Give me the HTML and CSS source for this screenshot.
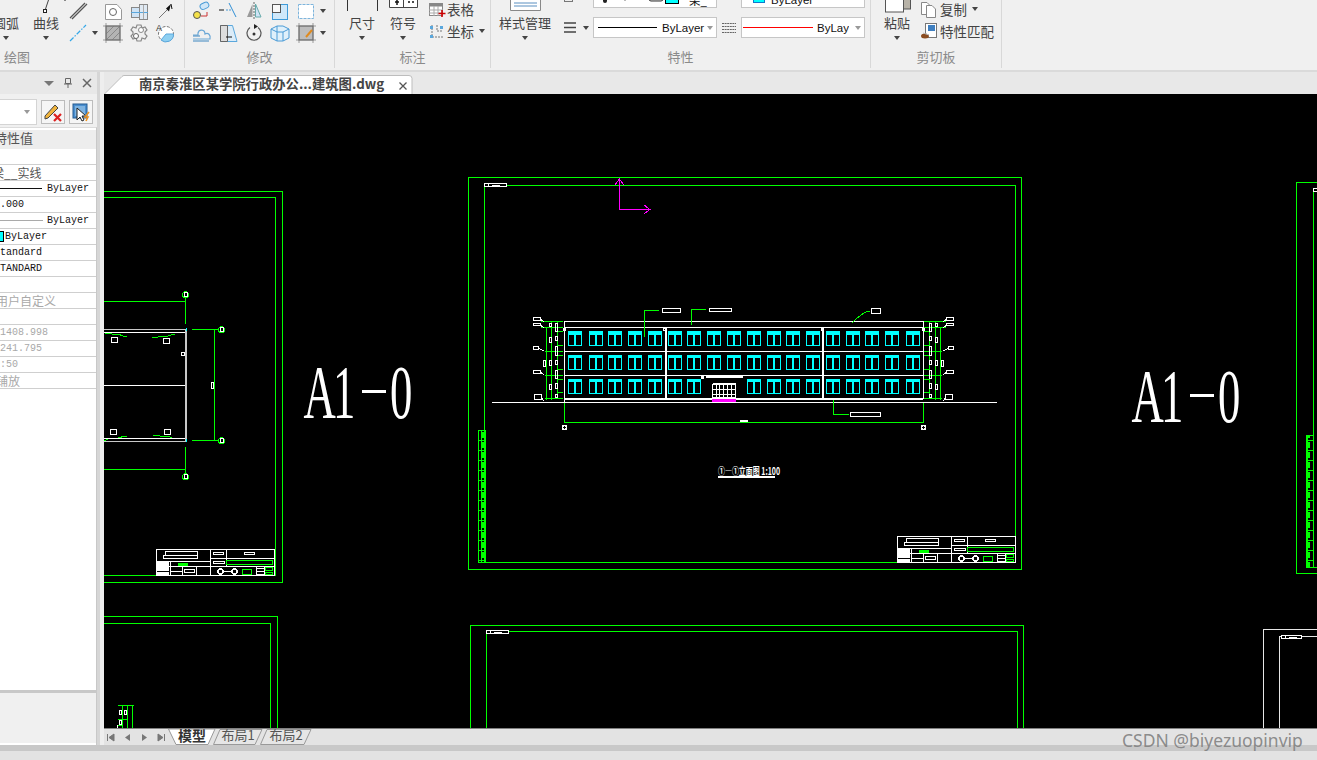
FILE: index.html
```html
<!DOCTYPE html>
<html lang="zh-CN">
<head>
<meta charset="utf-8">
<title>南京秦淮区某学院行政办公...建筑图.dwg</title>
<link rel="stylesheet" href="styles.css">
</head>
<body>
<header class="ribbon">
  <section class="grp grp-draw">
    <div class="grp-body">
      <div class="big big-first"><div class="big-ico"></div><span>圆弧</span><i class="arr"></i></div>
      <div class="big"><div class="big-ico"><svg width="40" height="14" viewBox="0 0 40 14"><path d="M22.500 0 19.500 9" fill="none" stroke="#444"/><rect x="17.500" y="9.500" width="3" height="3" fill="#fff" stroke="#222"/><path d="M38 .5h3" stroke="#888"/></svg></div><span>曲线</span><i class="arr"></i></div>
      <div class="icons icons-draw">
        <svg class="ic" viewBox="0 0 22 20"><path d="M3 17 18 2M5 18 20 3" stroke="#555" stroke-width="1.300" fill="none"/><path d="M4 17.500 19 2.500" stroke="#aaa" stroke-dasharray="1 1"/></svg>
        <span></span>
        <svg class="ic" viewBox="0 0 22 20"><path d="M3.500 3.500H15L19.500 8.500V18.500H3.500Z" fill="#fff" stroke="#999"/><circle cx="11" cy="11" r="3.500" fill="none" stroke="#666"/></svg>
        <svg class="ic" viewBox="0 0 22 20"><rect x="3.500" y="6.500" width="8" height="10" fill="#cfe3f5" stroke="#888"/><rect x="11.500" y="3.500" width="8" height="15" fill="#dfe9f3" stroke="#888"/><path d="M3 11.500H20" stroke="#5aa7dc"/><path d="M15.500 4V18" stroke="#aaa"/></svg>
        <svg class="ic" viewBox="0 0 22 20"><path d="M5 17 14 8" stroke="#777"/><path d="M17 3 12 7.500 15 10.500Z" fill="#111"/><path d="M17 3 18 8" stroke="#111"/></svg>
        <svg class="ic" viewBox="0 0 22 20"><path d="M3 18 19 2" stroke="#33a7e8" stroke-width="1.200" stroke-dasharray="5 1.500 1.500 1.500"/></svg>
        <i class="arr arr-cell"></i>
        <svg class="ic" viewBox="0 0 22 20"><rect x="4" y="3" width="14" height="14" fill="#b4b4b4" stroke="#666"/><path d="M4 17 18 3M4 11 12 3M10 17 18 9M1 3h20M1 17h20M4 0v20M18 0v20" stroke="#777" stroke-width=".7"/></svg>
        <svg class="ic" viewBox="0 0 22 20"><path d="M9 2h4l1 3 3-1 2 3-2 2v2l2 2-2 3-3-1-1 3H9l-1-3-3 1-2-3 2-2V9L3 7l2-3 3 1Z" fill="#f0f0f0" stroke="#888" stroke-width="1.200"/><circle cx="8" cy="13" r="2.500" fill="#fff" stroke="#666"/><circle cx="13" cy="7" r="2.500" fill="#fff" stroke="#888"/></svg>
        <svg class="ic" viewBox="0 0 22 20"><circle cx="12" cy="11" r="7.500" fill="#fff" stroke="#777" stroke-dasharray="3 1.500"/><path d="M12 11H19.500A7.500 7.500 0 0 1 7 17Z" fill="#8fd0f2" stroke="#5aa7dc"/><text x="2" y="8" class="ic-txt">A</text></svg>
      </div>
    </div>
    <div class="grp-label grp-label-left">绘图</div>
  </section>

  <section class="grp grp-mod">
    <div class="grp-body">
      <div class="icons icons-mod">
        <svg class="ic" viewBox="0 0 22 20"><rect x="9" y="2" width="9" height="6" rx="3" transform="rotate(-25 13 5)" fill="#cfe6f7" stroke="#4a9bd6"/><circle cx="6" cy="14" r="3.500" fill="#f5e24a" stroke="#555"/><path d="M10 15h6V11" fill="none" stroke="#c33"/></svg>
        <svg class="ic" viewBox="0 0 22 20"><path d="M2 9H7" stroke="#444" stroke-width="1.300"/><path d="M9 9h5" stroke="#4a9bd6" stroke-dasharray="2 1"/><path d="M12 2 19 16" stroke="#2f8fd6"/></svg>
        <svg class="ic" viewBox="0 0 22 20"><path d="M9.500 3 4 16H9.500Z" fill="#999"/><path d="M12.500 3 18 16H12.500Z" fill="#cfe3f5" stroke="#6aa"/><path d="M11 1V19" stroke="#666" stroke-dasharray="2 1"/></svg>
        <svg class="ic" viewBox="0 0 22 20"><rect x="3.500" y="3.500" width="15" height="15" fill="#cfe8fa" stroke="#3f9bd9"/><rect x="3.500" y="3.500" width="8" height="8" fill="#f8f8f8" stroke="#555"/></svg>
        <svg class="ic" viewBox="0 0 22 20"><rect x="3.500" y="3.500" width="15" height="14" fill="#fff" stroke="#7db4dc" stroke-dasharray="3 1"/></svg>
        <i class="arr arr-cell"></i>
        <svg class="ic" viewBox="0 0 22 20"><path d="M2 16H19C20 12 17 9 14 11 14 6 8 6 7 10V12H2" fill="none" stroke="#6aa7d6" stroke-width="1.200"/><path d="M2 13H9M2 18H18" stroke="#3c86bf"/></svg>
        <svg class="ic" viewBox="0 0 22 20"><path d="M3.500 2.500H15.500L20 18.500H3.500Z" fill="#dcecf8" stroke="#5aa7dc"/><path d="M3.500 2.500H10.500V18.500H3.500Z" fill="#ddd" stroke="#666"/><path d="M9 14h6" stroke="#111"/></svg>
        <svg class="ic" viewBox="0 0 22 20"><path d="M7 4.500A7 7 0 1 0 15 4.500" fill="none" stroke="#555" stroke-width="1.200"/><path d="M11 1V6L15 3.500Z" fill="#222"/><circle cx="11" cy="11" r="1.500" fill="#333"/></svg>
        <svg class="ic" viewBox="0 0 22 20"><path d="M2 6 8 3H14L20 6V15L14 18H8L2 15Z" fill="#dff0fb" stroke="#4a9bd6"/><path d="M2 6 8 9H14L20 6M8 9V18M14 9V18M8 3V9" fill="none" stroke="#4a9bd6"/></svg>
        <svg class="ic" viewBox="0 0 22 20"><rect x="4" y="3" width="14" height="14" fill="#bdbdbd" stroke="#666"/><path d="M1 3h20M1 17h20M4 0v20M18 0v20" stroke="#777" stroke-width=".7"/><path d="M11 14 17 7" stroke="#e08a1e" stroke-width="2"/></svg>
        <i class="arr arr-cell"></i>
      </div>
    </div>
    <div class="grp-label">修改</div>
  </section>

  <section class="grp grp-dim">
    <div class="grp-body">
      <div class="big"><div class="big-ico"><svg width="40" height="14" viewBox="0 0 40 14"><path d="M5.500 0V11M35.500 0V11" stroke="#333"/></svg></div><span>尺寸</span><i class="arr"></i></div>
      <div class="big big-sym"><div class="big-ico"><svg width="40" height="14" viewBox="0 0 40 14"><path d="M6.500 0V7.500H34.500V0M20.500 0V7.500" fill="#fff" stroke="#444"/><path d="M12 2H16M14 0V5M25 2h2M29 2h2" stroke="#111" stroke-width="1.500"/></svg></div><span>符号</span><i class="arr"></i></div>
      <div class="small-col">
        <div class="small"><svg class="ic-s" viewBox="0 0 18 18"><rect x="1.500" y="3.500" width="13" height="12" fill="#fff" stroke="#888"/><rect x="1.500" y="3.500" width="13" height="3" fill="#888"/><path d="M1 10h14M1 13h14M6 6v10M10 6v10" stroke="#aaa"/><path d="M14 10v7M10.500 13.500h7" stroke="#c00" stroke-width="1.600"/></svg><span>表格</span></div>
        <div class="small"><svg class="ic-s" viewBox="0 0 18 18"><path d="M4 3V15H15" fill="none" stroke="#777" stroke-dasharray="2 1"/><path d="M9 3V9H15" fill="none" stroke="#777" stroke-dasharray="2 1"/><rect x="2" y="4" width="3" height="3" fill="#5aa7dc"/><rect x="2" y="13" width="3" height="3" fill="#5aa7dc"/><rect x="12" y="4" width="3" height="3" fill="#5aa7dc"/></svg><span>坐标</span><i class="arr arr-inline"></i></div>
      </div>
    </div>
    <div class="grp-label">标注</div>
  </section>

  <section class="grp grp-prop">
    <div class="grp-body">
      <div class="big big-style"><div class="big-ico"><svg width="56" height="14" viewBox="0 0 56 14"><path d="M13.500 0V10.500H43.500V0" fill="#fff" stroke="#888"/><path d="M17 3H40M17 6H40" stroke="#5b8fc0"/></svg></div><span>样式管理</span><i class="arr"></i></div>
      <div class="prop-grid">
        <svg class="ic-p" viewBox="0 0 18 16"><rect x="3.500" y="2.500" width="8" height="10" fill="#eee" stroke="#777"/><path d="M12 9h5" stroke="#777"/></svg>
        <span></span>
        <div class="combo combo-top"><svg width="100" height="14" viewBox="0 0 100 14"><rect x="5" y="3" width="4" height="7" rx="2" fill="#222"/><circle cx="27" cy="4" r="3" fill="#fff" stroke="#333"/><rect x="36" y="3" width="9" height="4" fill="#222"/><rect x="51" y="2" width="14" height="6" rx="2" fill="#ddd" stroke="#333"/><rect x="67.500" y=".500" width="13" height="10" fill="#0ff" stroke="#000"/></svg><span class="combo-txt">架_</span></div>
        <svg class="ic-p" viewBox="0 0 18 16"><circle cx="9" cy="2" r="5.500" fill="#ee9b22"/><path d="M9 2V8A6 6 0 0 1 4 4Z" fill="#7ebb3a"/></svg>
        <div class="combo combo-top"><svg width="24" height="14" viewBox="0 0 24 14"><rect x="7.500" y="1.500" width="11" height="8" fill="#0ff" stroke="#1177cc"/></svg><span class="combo-txt combo-by">ByLayer</span></div>
        <svg class="ic-p" viewBox="0 0 18 16"><path d="M3 3H15M3 7.500H15M3 12H15" stroke="#444" stroke-width="1.300"/></svg>
        <i class="arr arr-cell"></i>
        <div class="combo"><span class="swatch swatch-black"></span><span class="combo-txt">ByLayer</span><i class="arr arr-gray"></i></div>
        <svg class="ic-p" viewBox="0 0 18 16"><path d="M2 3.500H16M2 6.500H16M2 9.500H16M2 12.500H16" stroke="#666" stroke-dasharray="2 .6"/></svg>
        <div class="combo"><span class="swatch swatch-red"></span><span class="combo-txt combo-clip">ByLayer</span><i class="arr arr-gray"></i></div>
      </div>
    </div>
    <div class="grp-label">特性</div>
  </section>

  <section class="grp grp-clip">
    <div class="grp-body">
      <div class="big big-paste"><div class="big-ico"><svg width="40" height="14" viewBox="0 0 40 14"><rect x="26.500" y="-2" width="7" height="11" fill="#b8b3a8" stroke="#555"/><rect x="8.500" y="-2" width="18" height="14" fill="#fff" stroke="#555"/></svg></div><span>粘贴</span><i class="arr"></i></div>
      <div class="small-col small-col-clip">
        <div class="small"><svg class="ic-s" viewBox="0 0 18 18"><path d="M1.500 2.500H7L10 5.500V14.500H1.500Z" fill="#fff" stroke="#888"/><path d="M6.500 5.500H12L15.500 9V17.500H6.500Z" fill="#fff" stroke="#888"/></svg><span>复制</span><i class="arr arr-inline"></i></div>
        <div class="small"><svg class="ic-s" viewBox="0 0 18 18"><rect x="5.500" y="1.500" width="11" height="14" fill="#fff" stroke="#777"/><rect x="8" y="3" width="7" height="6" fill="#3f7fc0"/><ellipse cx="5" cy="14" rx="4" ry="2.500" fill="#8a4b1f"/><path d="M3 11 9 13" stroke="#bbb"/></svg><span>特性匹配</span></div>
      </div>
    </div>
    <div class="grp-label">剪切板</div>
  </section>
</header>

<main class="workspace">
  <aside class="panel">
    <div class="panel-head">
      <i class="arr arr-big"></i>
      <svg class="pin" width="12" height="12" viewBox="0 0 12 12"><path d="M3.500 1.500H8.500V6.500H3.500ZM2 7H10M6 7V11" fill="none" stroke="#666"/></svg>
      <svg class="pin" width="10" height="10" viewBox="0 0 10 10"><path d="M1 1 9 9M9 1 1 9" stroke="#666" stroke-width="1.500"/></svg>
    </div>
    <div class="panel-tools">
      <div class="panel-combo"><i class="arr arr-gray"></i></div>
      <button class="tool"><svg width="22" height="22" viewBox="0 0 22 22"><path d="M3 15 13 4 16 7 6 17 3 18Z" fill="#f0b43c" stroke="#444"/><path d="M12 13 19 20M19 13 12 20" stroke="#d22" stroke-width="2.200"/></svg></button>
      <button class="tool"><svg width="22" height="22" viewBox="0 0 22 22"><rect x="3" y="3" width="14" height="14" fill="#4a8fd0" stroke="#245a90"/><rect x="5" y="5" width="10" height="10" fill="#7fb3e0"/><path d="M7 7V19L10 16 12 20 14 19 12 15H16Z" fill="#fff" stroke="#222"/><path d="M19 11 15 16H18L16 20" fill="none" stroke="#ee9322" stroke-width="1.600"/></svg></button>
    </div>
    <div class="ptable">
      <div class="pth"><span class="cut">特性值</span></div>
      <div class="prow"></div>
      <div class="prow"><span class="zh cut2">梁__实线</span></div>
      <div class="prow"><span class="pline"></span><span class="mono">ByLayer</span></div>
      <div class="prow"><span class="mono cut3">1.000</span></div>
      <div class="prow"><span class="pline pline-gray"></span><span class="mono">ByLayer</span></div>
      <div class="prow"><span class="pswatch"></span><span class="mono">ByLayer</span></div>
      <div class="prow"><span class="mono cut4">Standard</span></div>
      <div class="prow"><span class="mono cut4">STANDARD</span></div>
      <div class="prow"></div>
      <div class="prow gray"><span class="zh cut5">用户自定义</span></div>
      <div class="prow gray"></div>
      <div class="prow gray"><span class="mono">1408.998</span></div>
      <div class="prow gray"><span class="mono">241.795</span></div>
      <div class="prow gray"><span class="mono cut3">1:50</span></div>
      <div class="prow gray"><span class="zh cut5">铺放</span></div>
      <div class="pfill"></div>
      <div class="pfoot"></div>
    </div>
  </aside>
  <div class="gutter"></div>
  <div class="doc">
    <div class="doc-tabs">
      <div class="doc-tab">
        <svg class="tab-bg" width="309" height="19" viewBox="0 0 309 19"><path d="M.500 19 18 1.500Q19 .500 20 .500H305Q308 .500 308 3.500V19" fill="#fff" stroke="#bdbdbd"/></svg>
        <span class="doc-title">南京秦淮区某学院行政办公...建筑图.dwg</span>
        <svg class="doc-x" width="8" height="8" viewBox="0 0 8 8"><path d="M.500 .500 7.500 7.500M7.500 .500 .500 7.500" stroke="#555" stroke-width="1.300"/></svg>
      </div>
    </div>

    <svg class="canvas" viewBox="104 94 1213 634" preserveAspectRatio="none">
      <defs>
        <pattern id="rungs" x="478" y="430" width="7" height="10" patternUnits="userSpaceOnUse">
          <path d="M0 .500H7M3.500 0V10" stroke="#0f0" fill="none"/>
          <rect x="4" y="2" width="2" height="6" fill="#0f0"/>
        </pattern>
        <g id="win">
          <rect width="14" height="3" fill="#0ff"/>
          <path d="M.500 3V15M13.500 3V15M6.500 3V15M7.500 3V15M0 14.500H14" stroke="#0ff" fill="none"/>
        </g>
        <g id="wincol">
          <use href="#win" y="331"/>
          <rect y="331" width="14" height="4" fill="#0ff"/>
          <use href="#win" y="355"/>
          <use href="#win" y="379"/>
        </g>
        <g id="wincol2">
          <use href="#win" y="331"/>
          <rect y="331" width="14" height="4" fill="#0ff"/>
          <use href="#win" y="355"/>
        </g>
        <g id="mark">
          <circle r="3" fill="none" stroke="#0f0"/>
          <rect x="-1.500" y="-2" width="3" height="4" fill="#000" stroke="#fff"/>
        </g>
        <g id="side" fill="none">
          <path d="M541 321.500H563M541 327.500H563M545 351.500H563M545 375.500H563M545 398.500H563M546.500 327V400M551.500 321V400M557.500 321V399M557 331.500H563M557 345.500H563M557 355.500H563M557 369.500H563M557 379.500H563M557 392.500H563" stroke="#0f0"/>
          <g stroke="#fff">
            <rect x="533.500" y="317.500" width="7" height="3"/><rect x="533.500" y="323.500" width="7" height="2"/><rect x="533.500" y="346.500" width="5" height="3"/><rect x="533.500" y="370.500" width="7" height="3"/><rect x="534.500" y="394.500" width="7" height="5"/>
            <path d="M541 319.500 544 322M541 325.500 544 328M539 348.500 544 351M541 372.500 544 375M542 398.500 544 401"/>
            <rect x="549.500" y="323.500" width="2" height="3"/><rect x="549.500" y="337.500" width="2" height="5"/><rect x="543.500" y="360.500" width="2" height="6"/><rect x="549.500" y="360.500" width="2" height="5"/><rect x="549.500" y="384.500" width="2" height="5"/>
            <rect x="555.500" y="323.500" width="2" height="8"/><rect x="555.500" y="336.500" width="2" height="4"/><rect x="555.500" y="346.500" width="2" height="9"/><rect x="555.500" y="360.500" width="2" height="4"/><rect x="555.500" y="370.500" width="2" height="8"/><rect x="555.500" y="383.500" width="2" height="5"/><rect x="555.500" y="394.500" width="2" height="3"/>
          </g>
        </g>
        <g id="titleblock" fill="none">
          <g stroke="#fff">
            <rect x=".500" y=".500" width="118" height="26"/>
            <path d="M54.500 0V27M70.500 0V17M54 9.500H119M54 17.500H119M0 12.500H54M0 17.500H54M14.500 12V27M26.500 17V27M40.500 17V27M14 22.500H26"/>
            <rect x="9.500" y="2.500" width="32" height="4"/><rect x="7.500" y="6.500" width="34" height="3"/>
            <rect x="57.500" y="3.500" width="10" height="2"/><rect x="88.500" y="3.500" width="10" height="2"/><rect x="57.500" y="12.500" width="11" height="2"/>
            <rect x="1.500" y="13.500" width="11" height="3" fill="#fff"/><rect x="1.500" y="18.500" width="11" height="3" fill="#fff"/><rect x="1.500" y="23" width="11" height="3" fill="#fff"/>
            <rect x="28.500" y="20.500" width="10" height="3"/>
            <circle cx="64.500" cy="22.500" r="2.500" stroke-width="1.500"/><circle cx="78.500" cy="22.500" r="2.500" stroke-width="1.500"/>
            <path d="M67 22.500H76M100.500 18V27M100 19.500H108M100 22.500H108M100 25.500H108M108.500 17V27"/>
          </g>
          <g stroke="#0f0">
            <rect x="70.500" y="11.500" width="46" height="4"/>
            <rect x="22.500" y="14.500" width="9" height="2" fill="#0f0"/>
            <rect x="86.500" y="20.500" width="9" height="5"/>
            <rect x="109.500" y="18.500" width="7" height="3"/><rect x="109.500" y="23.500" width="7" height="2"/>
          </g>
        </g>
      </defs>

      <rect x="104" y="94" width="1213" height="634" fill="#000"/>

      <!-- left sheet -->
      <g fill="none" stroke="#0f0">
        <path d="M104 191.500H282.500V582.500H104"/>
        <path d="M104 197.500H275.500V575.500H104"/>
        <path d="M104 301.500H185.500V324M185.500 297V301M192 329.500H218M214.500 329V440M192 440.500H218M185.500 447V473M104 469.500H185.500"/>
        <path d="M105 333.500 112 334H118L123 336H127M152 337H158L160 336H168L172 334.500H175M104 441 110 438H118L125 436H127M153 435H157L160 436H168L172 438H178"/>
      </g>
      <g fill="none" stroke="#fff">
        <path d="M104 332.500H185M104 385.500H185M104 438.500H185"/>
        <rect x="111.500" y="337.500" width="6" height="5"/><rect x="163.500" y="338.500" width="6" height="5"/><rect x="110.500" y="429.500" width="6" height="5"/><rect x="164.500" y="429.500" width="6" height="5"/>
        <rect x="181.500" y="352.500" width="3" height="3"/>
        <rect x="211.500" y="382.500" width="2" height="6"/>
      </g>
      <path d="M104 329.500H185M104 441.500H187" stroke="#c8c8c8" fill="none"/>
      <path d="M186 329V441" stroke="#c8c8c8" stroke-width="2"/>
      <path d="M186 328V331M186 439V442" stroke="#0ff"/>
      <use href="#mark" x="185.500" y="294.500"/><use href="#mark" x="221.500" y="329.500"/><use href="#mark" x="221.500" y="440.500"/><use href="#mark" x="185.500" y="476.500"/>
      <use href="#titleblock" transform="translate(156 549)"/>
      <text class="big-label" transform="translate(303.500 418) scale(.58 1)" x="0 51 115 149"><tspan>A1</tspan><tspan class="big-dash" dy="-17.500">-</tspan><tspan dy="17.500">0</tspan></text>
      <rect x="362" y="390" width="24" height="3" fill="#fff"/>

      <!-- left sheet below -->
      <path d="M104 616.500H277.500V728M104 623.500H270.500V728" fill="none" stroke="#0f0"/>
      <path d="M118 705.500H134M122.500 705V728M127.500 705V728M132.500 705V728M118 719.500H128M118 725.500H123" fill="none" stroke="#0f0"/>
      <path d="M119.500 710.500H121.500V714.500H119.500ZM124.500 710.500H126.500V714.500H124.500ZM119.500 720.500H121.500V724.500H119.500ZM117.500 725V728" fill="none" stroke="#fff"/>

      <!-- centre sheet -->
      <g fill="none" stroke="#0f0">
        <rect x="468.500" y="177.500" width="553" height="392"/>
        <rect x="484.500" y="185.500" width="531" height="377"/>
        <rect x="478" y="430" width="7" height="132" fill="url(#rungs)"/>
      </g>
      <rect x="484.500" y="183.500" width="22" height="3" fill="#000" stroke="#fff"/>
      <path d="M488 183V187M492 185H500" stroke="#fff"/>
      <path d="M619.500 209V179M615 185 619.500 179 624 185M619 209.500H650M644 205 650 209.500 644 214" fill="none" stroke="#f0f"/>

      <!-- building -->
      <g>
        <g stroke="#fff" fill="none">
          <path d="M492 402.500H997"/>
          <path d="M564 321.500H923.500V399M564.500 321V403"/>
          <path d="M564 327.500H923M564 351.500H923M564 375.500H923"/>
          <path d="M564 399.500H923M564 398.500H923"/>
          <path d="M665.500 327V399M666.500 327V399M823.500 327V399M822.500 327V399"/>
          <rect x="563.500" y="328.500" width="2" height="2"/><rect x="663.500" y="328.500" width="2" height="2"/><rect x="821.500" y="328.500" width="2" height="2"/><rect x="922.500" y="328.500" width="2" height="2"/>
        </g>
        <use href="#wincol" x="568"/><use href="#wincol" x="589"/><use href="#wincol" x="608"/><use href="#wincol" x="628"/><use href="#wincol" x="648"/>
        <use href="#wincol" x="668"/><use href="#wincol" x="687"/><use href="#wincol2" x="707"/><use href="#wincol2" x="727"/><use href="#wincol" x="747"/>
        <use href="#wincol" x="767"/><use href="#wincol" x="786"/><use href="#wincol" x="806"/><use href="#wincol" x="826"/>
        <use href="#wincol" x="846"/><use href="#wincol" x="865"/><use href="#wincol" x="885"/><use href="#wincol" x="906"/>
        <!-- door and canopy -->
        <rect x="701" y="376" width="3" height="3" fill="#fff"/><rect x="706" y="376" width="37" height="2" fill="#fff"/>
        <path d="M712.500 383.500H735.500V399M712.500 383.500V399M712 384.500H736M712 389.500H736M712 394.500H736M712 397.500H736M716.500 383V399M719.500 383V399M723.500 383V399M727.500 383V399M731.500 383V399" fill="none" stroke="#fff"/>
        <rect x="712" y="399" width="24" height="3" fill="#f0f"/>
        <use href="#side"/>
        <use href="#side" transform="translate(1487 0) scale(-1 1)"/>
        <g fill="none" stroke="#0f0">
          <path d="M644.500 337V310.500H659M691.500 325V309.500H706"/>
          <path d="M852 323 856 319 861 315 866 312 870 311.500"/>
          <path d="M833.500 400V414.500H849"/>
          <path d="M564.500 403V422.500H923.500V403"/>
        </g>
        <g fill="none" stroke="#fff">
          <rect x="662.500" y="308.500" width="18" height="4"/>
          <rect x="709.500" y="308.500" width="22" height="3"/>
          <rect x="871.500" y="308.500" width="9" height="5"/>
          <rect x="850.500" y="412.500" width="30" height="4"/>
          <circle cx="564.500" cy="427.500" r="2" stroke-width="1.500"/><circle cx="923.500" cy="427.500" r="2" stroke-width="1.500"/>
        </g>
        <rect x="740" y="420" width="8" height="2" fill="#fff"/>
      </g>
      <text class="caption" x="718" y="475" textLength="62" lengthAdjust="spacingAndGlyphs">①—①立面图 1:100</text>
      <path d="M718 477H775" stroke="#fff" stroke-width="2"/>
      <use href="#titleblock" transform="translate(897 536)"/>
      <text class="big-label" transform="translate(1131.500 422) scale(.58 1)" x="0 51 115 149"><tspan>A1</tspan><tspan class="big-dash" dy="-17.500">-</tspan><tspan dy="17.500">0</tspan></text>
      <rect x="1190" y="394" width="24" height="3" fill="#fff"/>

      <!-- right sheet -->
      <path d="M1317 182.500H1296.500V573.500H1317M1317 188.500H1313.500V567H1317" fill="none" stroke="#0f0"/>
      <rect x="1306" y="435" width="7" height="132" fill="url(#rungs)" stroke="#0f0"/>
      <path d="M1313.500 188.500H1317V191.500H1313.500Z" fill="none" stroke="#fff"/>

      <!-- lower sheets -->
      <path d="M470.500 728V625.500H1023.500V728M486.500 728V631.500H1017.500V728" fill="none" stroke="#0f0"/>
      <rect x="486.500" y="630.500" width="22" height="3" fill="#000" stroke="#fff"/>
      <path d="M490 630V634M494 632H502" stroke="#fff"/>
      <path d="M1263.500 728V629.500H1317M1279.500 728V636.500H1317" fill="none" stroke="#e6e6e6"/>
      <rect x="1281.500" y="635.500" width="20" height="3" fill="#000" stroke="#fff"/>
      <path d="M1285 635V639M1289 637H1297" stroke="#fff"/>
    </svg>

    <nav class="layout-bar">
      <div class="nav-btns">
        <svg width="9" height="9" viewBox="0 0 9 9"><path d="M1.500 1V8M8 1 3 4.500 8 8Z" fill="#777" stroke="#777"/></svg>
        <svg width="9" height="9" viewBox="0 0 9 9"><path d="M7 1 2 4.500 7 8Z" fill="#777"/></svg>
        <svg width="9" height="9" viewBox="0 0 9 9"><path d="M2 1 7 4.500 2 8Z" fill="#777"/></svg>
        <svg width="9" height="9" viewBox="0 0 9 9"><path d="M7.500 1V8M1 1 6 4.500 1 8Z" fill="#777" stroke="#777"/></svg>
      </div>
      <div class="ltab ltab-model">
        <svg class="tab-bg" width="48" height="16" viewBox="0 0 48 16"><path d="M.500 0 8 15.500H40L47 0Z" fill="#fff" stroke="#999"/></svg>
        <span>模型</span>
      </div>
      <div class="ltab ltab-a">
        <svg class="tab-bg" width="50" height="16" viewBox="0 0 50 16"><path d="M7 .500H49L42 15.500H7L.500 15.500Z" fill="#e6e6e6" stroke="#999"/></svg>
        <span>布局1</span>
      </div>
      <div class="ltab ltab-b">
        <svg class="tab-bg" width="52" height="16" viewBox="0 0 52 16"><path d="M7 .500H51L44 15.500H7L.500 15.500Z" fill="#e6e6e6" stroke="#999"/></svg>
        <span>布局2</span>
      </div>
    </nav>
  </div>
</main>
<div class="hscroll"></div>
<footer class="status"></footer>
<div class="watermark">CSDN @biyezuopinvip</div>
</body>
</html>
```
FILE: styles.css
```css
* { box-sizing: border-box; }
html, body { margin: 0; padding: 0; }
body {
  width: 1317px;
  height: 760px;
  overflow: hidden;
  position: relative;
  background: #f0f0f0;
  font-family: "Noto Sans CJK SC", "Noto Sans", sans-serif;
  color: #444;
}

/* ribbon */
.ribbon {
  display: flex;
  height: 72px;
  background: #f0f0f0;
  border-bottom: 2px solid #dadada;
  overflow: hidden;
}
.grp {
  display: flex;
  flex-direction: column;
  height: 68px;
  border-right: 1px solid #d8d8d8;
  flex: none;
}
.grp-draw { width: 185px; }
.grp-mod { width: 150px; }
.grp-dim { width: 156px; }
.grp-prop { width: 380px; }
.grp-clip { width: 131px; }
.grp-mod .grp-body { padding-left: 4px; }
.grp-dim .grp-body { padding-left: 7px; }
.grp-prop .grp-body { padding-left: 6px; }
.grp-clip .grp-body { padding-left: 6px; }
.grp-body { display: flex; height: 48px; flex: none; }
.grp-label {
  height: 18px;
  font-size: 13px;
  line-height: 17px;
  color: #8a8a8a;
  text-align: center;
}
.grp-draw .grp-label-left { text-align: left; padding-left: 4px; }

.big {
  width: 40px;
  flex: none;
  display: flex;
  flex-direction: column;
  align-items: center;
  font-size: 13px;
  line-height: 18px;
  white-space: nowrap;
}
.big-first { margin-left: -14px; }
.big-sym { margin-left: 1px; }
.big-style { width: 56px; }
.big-ico { height: 14px; flex: none; }
.big-ico svg { display: block; overflow: hidden; }
.big .arr { margin-top: 4px; }

.arr {
  display: block;
  width: 0;
  height: 0;
  border-left: 3.500px solid transparent;
  border-right: 3.500px solid transparent;
  border-top: 4px solid #444;
}
.arr-cell { align-self: center; justify-self: center; }
.arr-inline { margin-left: 5px; }
.arr-gray { border-top-color: #999; }
.arr-big { border-left-width: 5px; border-right-width: 5px; border-top: 5px solid #777; }

.icons {
  display: grid;
  grid-auto-rows: 22px;
  align-items: center;
  justify-items: center;
}
.icons-draw { grid-template-columns: 24px 10px 26px 26px 26px; }
.icons-mod { grid-template-columns: 26px 26px 26px 26px 26px 8px; }
.ic { width: 22px; height: 20px; display: block; }
.ic-txt { font: 9px "Liberation Sans", sans-serif; fill: #333; }

.small-col { margin: -2px 0 0 5px; display: flex; flex-direction: column; }
.small-col-clip { margin-left: 3px; }
.small {
  display: flex;
  align-items: center;
  height: 22px;
  font-size: 13.500px;
  white-space: nowrap;
}
.ic-s { width: 18px; height: 18px; flex: none; margin-right: 1px; }
.small-col-clip .ic-s { margin-right: 2px; }

.prop-grid {
  display: grid;
  grid-template-columns: 18px 14px 124px 24px 124px;
  grid-template-rows: 22px 21px;
  row-gap: 9px;
  margin: -14px 0 0 8px;
  align-items: center;
  justify-items: center;
}
.ic-p { width: 18px; height: 16px; display: block; }
.combo {
  width: 124px;
  height: 21px;
  display: flex;
  align-items: center;
  background: #fff;
  border: 1px solid #c6c6c6;
  padding: 0 3px 0 4px;
  font: 11.500px "Liberation Sans", Arial, sans-serif;
  color: #111;
  overflow: hidden;
}
.combo-top { height: 22px; align-items: flex-end; padding-bottom: 0; }
.combo-top svg { flex: none; }
.combo-top .combo-txt { font-family: "Noto Sans CJK SC", sans-serif; margin-left: -9px; line-height: 14px; }
.combo-top .combo-by { margin-left: 1px; font-family: "Liberation Sans", sans-serif; }
.swatch { width: 59px; height: 1px; flex: none; }
.swatch-black { background: #000; }
.swatch-red { background: #f00; width: 70px; margin-left: -3px; }
.combo-txt { margin-left: 5px; white-space: nowrap; width: 44px; flex: none; }
.combo-clip { width: 32px; overflow: hidden; margin-left: 4px; }
.combo .arr { margin-left: auto; }

/* workspace */
.workspace { display: flex; height: 673px; }
.panel { width: 97px; flex: none; display: flex; flex-direction: column; background: #f0f0f0; overflow: hidden; }
.panel-head {
  height: 22px;
  background: #e8e8e8;
  display: flex;
  align-items: center;
  justify-content: flex-end;
  gap: 8px;
  padding-right: 5px;
}
.panel-tools { height: 33px; display: flex; align-items: center; gap: 4px; padding-top: 3px; flex: none; }
.panel-combo {
  width: 38px;
  height: 26px;
  margin-left: -1px;
  background: #fff;
  border: 1px solid #d4d4d4;
  display: flex;
  align-items: center;
  justify-content: flex-end;
  padding-right: 6px;
}
.tool {
  width: 24px;
  height: 24px;
  padding: 0;
  margin-right: 0;
  background: #f5f5f5;
  border: 1px solid #bcbcbc;
  display: flex;
  align-items: center;
  justify-content: center;
}
.ptable {
  flex: 1;
  display: flex;
  flex-direction: column;
  background: #fff;
  border-right: 1px solid #c8c8c8;
  border-top: 1px solid #dcdcdc;
  padding-top: 2px;
  min-height: 0;
}
.pth {
  height: 19px;
  background: #ededed;
  font-size: 13px;
  line-height: 16px;
  color: #555;
  flex: none;
  overflow: hidden;
}
.prow {
  height: 16px;
  flex: none;
  display: flex;
  align-items: center;
  border-bottom: 1px solid #cfcfcf;
  white-space: nowrap;
  overflow: hidden;
}
.prow.gray, .prow.gray .zh, .prow.gray .mono { color: #a9a9a9; }
.zh { font-size: 12px; color: #555; line-height: 13px; margin-bottom: 1px; }
.mono { font: 10px/15px "Liberation Mono", "DejaVu Sans Mono", monospace; color: #111; }
.cut { margin-left: -6px; display: block; }
.cut2 { margin-left: -8px; }
.cut3 { margin-left: -6px; }
.cut4 { margin-left: -6px; }
.cut5 { margin-left: -4px; }
.pline { width: 42px; height: 1px; background: #111; margin-right: 5px; flex: none; }
.pline-gray { width: 43px; background: #aaa; margin-right: 4px; }
.pswatch { width: 4px; height: 11px; background: #0ff; border: 1px solid #000; border-left: 0; margin-right: 1px; flex: none; }
.pfill { flex: 1; background: #fff; border-bottom: 3px solid #c8c8c8; }
.pfoot { height: 52px; flex: none; background: #f0f0f0; border-bottom: 2px solid #fff; }

.gutter { width: 7px; flex: none; background: #eeeeee; border-left: 3px solid #d6d6d6; }

.doc { flex: 1; display: flex; flex-direction: column; min-width: 0; }
.doc-tabs { height: 22px; flex: none; background: #e8e8e8; padding: 3px 0 0 0; }
.doc-tab { position: relative; width: 309px; height: 19px; }
.tab-bg { position: absolute; left: 0; top: 0; }
.doc-title {
  position: relative;
  display: block;
  padding-left: 35px;
  font-size: 13.330px;
  line-height: 17px;
  font-weight: 700;
  color: #444;
  white-space: nowrap;
}
.doc-x { position: absolute; left: 295px; top: 7px; }

.canvas { display: block; width: 1213px; height: 634px; flex: none; shape-rendering: crispEdges; }
.big-label { font: 77px "Liberation Serif", serif; fill: #fff; }
.big-dash { font-size: 40px; }
.caption { font: 700 10px "Noto Sans CJK SC", sans-serif; fill: #fff; }

.layout-bar {
  height: 17px;
  flex: none;
  display: flex;
  background: #e3e3e3;
  border-top: 1px solid #808080;
}
.nav-btns { width: 64px; display: flex; align-items: center; gap: 8px; padding-left: 2px; flex: none; justify-content: flex-start; }
.ltab {
  position: relative;
  height: 16px;
  font-size: 13px;
  line-height: 12px;
  color: #555;
  flex: none;
  text-align: center;
}
.ltab span { position: relative; }
.ltab-model { width: 48px; font-size: 14px; font-weight: 700; color: #333; }
.ltab-a { width: 50px; margin-left: -3px; }
.ltab-b { width: 52px; margin-left: -3px; }

.hscroll { height: 6px; background: #c8c8c8; }
.status { height: 9px; background: #e3e3e3; }
.watermark {
  position: absolute;
  left: 1122px;
  top: 730px;
  font: 17.500px/20px "Noto Sans", sans-serif;
  color: rgba(128, 128, 128, .9);
  white-space: nowrap;
}
```
